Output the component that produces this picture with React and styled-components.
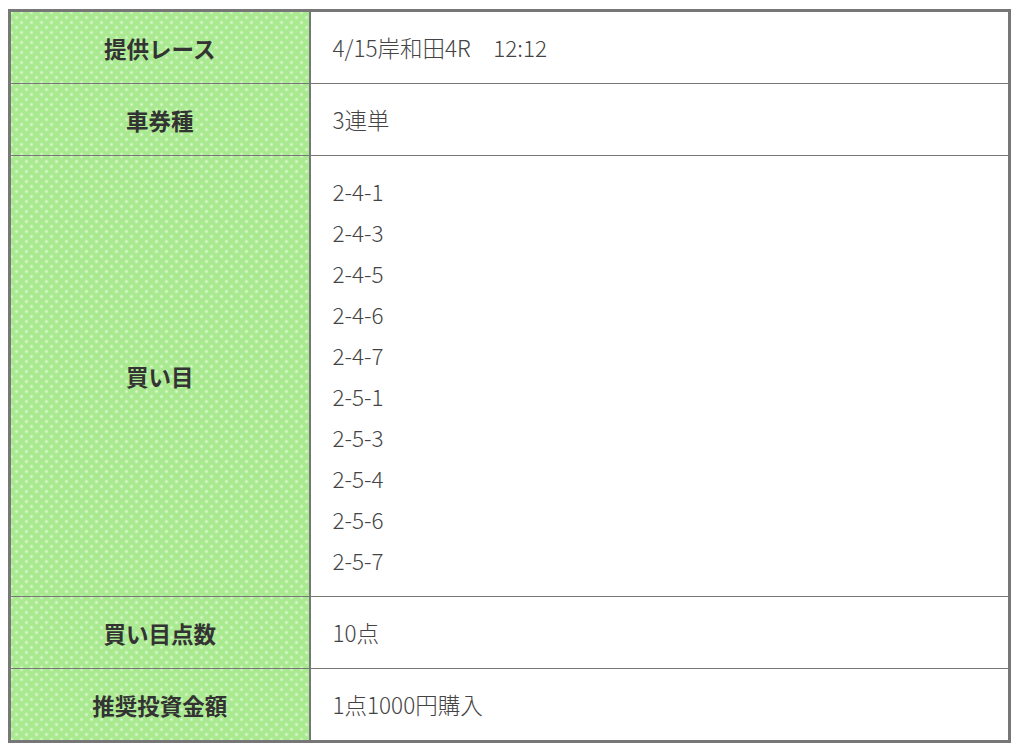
import React from "react";
import styled, { createGlobalStyle } from "styled-components";

const GlobalStyle = createGlobalStyle`
  body {
    margin: 0;
    padding: 9px 8px;
    background: #fff;
    font-family: "Noto Sans CJK JP", "Noto Sans", sans-serif;
  }
`;

const rows = [
  { label: "提供レース", values: ["4/15岸和田4R　12:12"] },
  { label: "車券種", values: ["3連単"] },
  {
    label: "買い目",
    values: [
      "2-4-1",
      "2-4-3",
      "2-4-5",
      "2-4-6",
      "2-4-7",
      "2-5-1",
      "2-5-3",
      "2-5-4",
      "2-5-6",
      "2-5-7",
    ],
  },
  { label: "買い目点数", values: ["10点"] },
  { label: "推奨投資金額", values: ["1点1000円購入"] },
];

export default function App() {
  return (
    <>
      <GlobalStyle />
      <Table>
        <colgroup>
          <Col $width={300} />
          <Col />
        </colgroup>
        <tbody>
          {rows.map((row) => (
            <tr key={row.label}>
              <Label>{row.label}</Label>
              <Value>
                {row.values.map((v) => (
                  <Line key={v}>{v}</Line>
                ))}
              </Value>
            </tr>
          ))}
        </tbody>
      </Table>
    </>
  );
}

const Table = styled.table`
  width: 1003px;
  table-layout: fixed;
  border-collapse: collapse;
  border: 3px solid #777;
`;

const Col = styled.col`
  width: ${(p) => (p.$width ? `${p.$width}px` : "auto")};
`;

const Label = styled.th`
  padding: 15px 10px;
  border: 1px solid #777;
  border-right-width: 2px;
  background-color: #a9e98f;
  background-image: radial-gradient(rgba(255, 255, 255, 0.6) 1.3px, transparent 1.7px),
    radial-gradient(rgba(255, 255, 255, 0.6) 1.3px, transparent 1.7px);
  background-size: 10px 10px;
  background-position: 0 0, 5px 5px;
  color: #333;
  font-size: 22.5px;
  font-weight: 700;
  text-align: center;
  vertical-align: middle;
`;

const Value = styled.td`
  padding: 15px 22px;
  border: 1px solid #777;
  color: #444;
  font-size: 22.5px;
  font-weight: 300;
  text-align: left;
  vertical-align: middle;
`;

const Line = styled.div`
  line-height: 41px;
`;
